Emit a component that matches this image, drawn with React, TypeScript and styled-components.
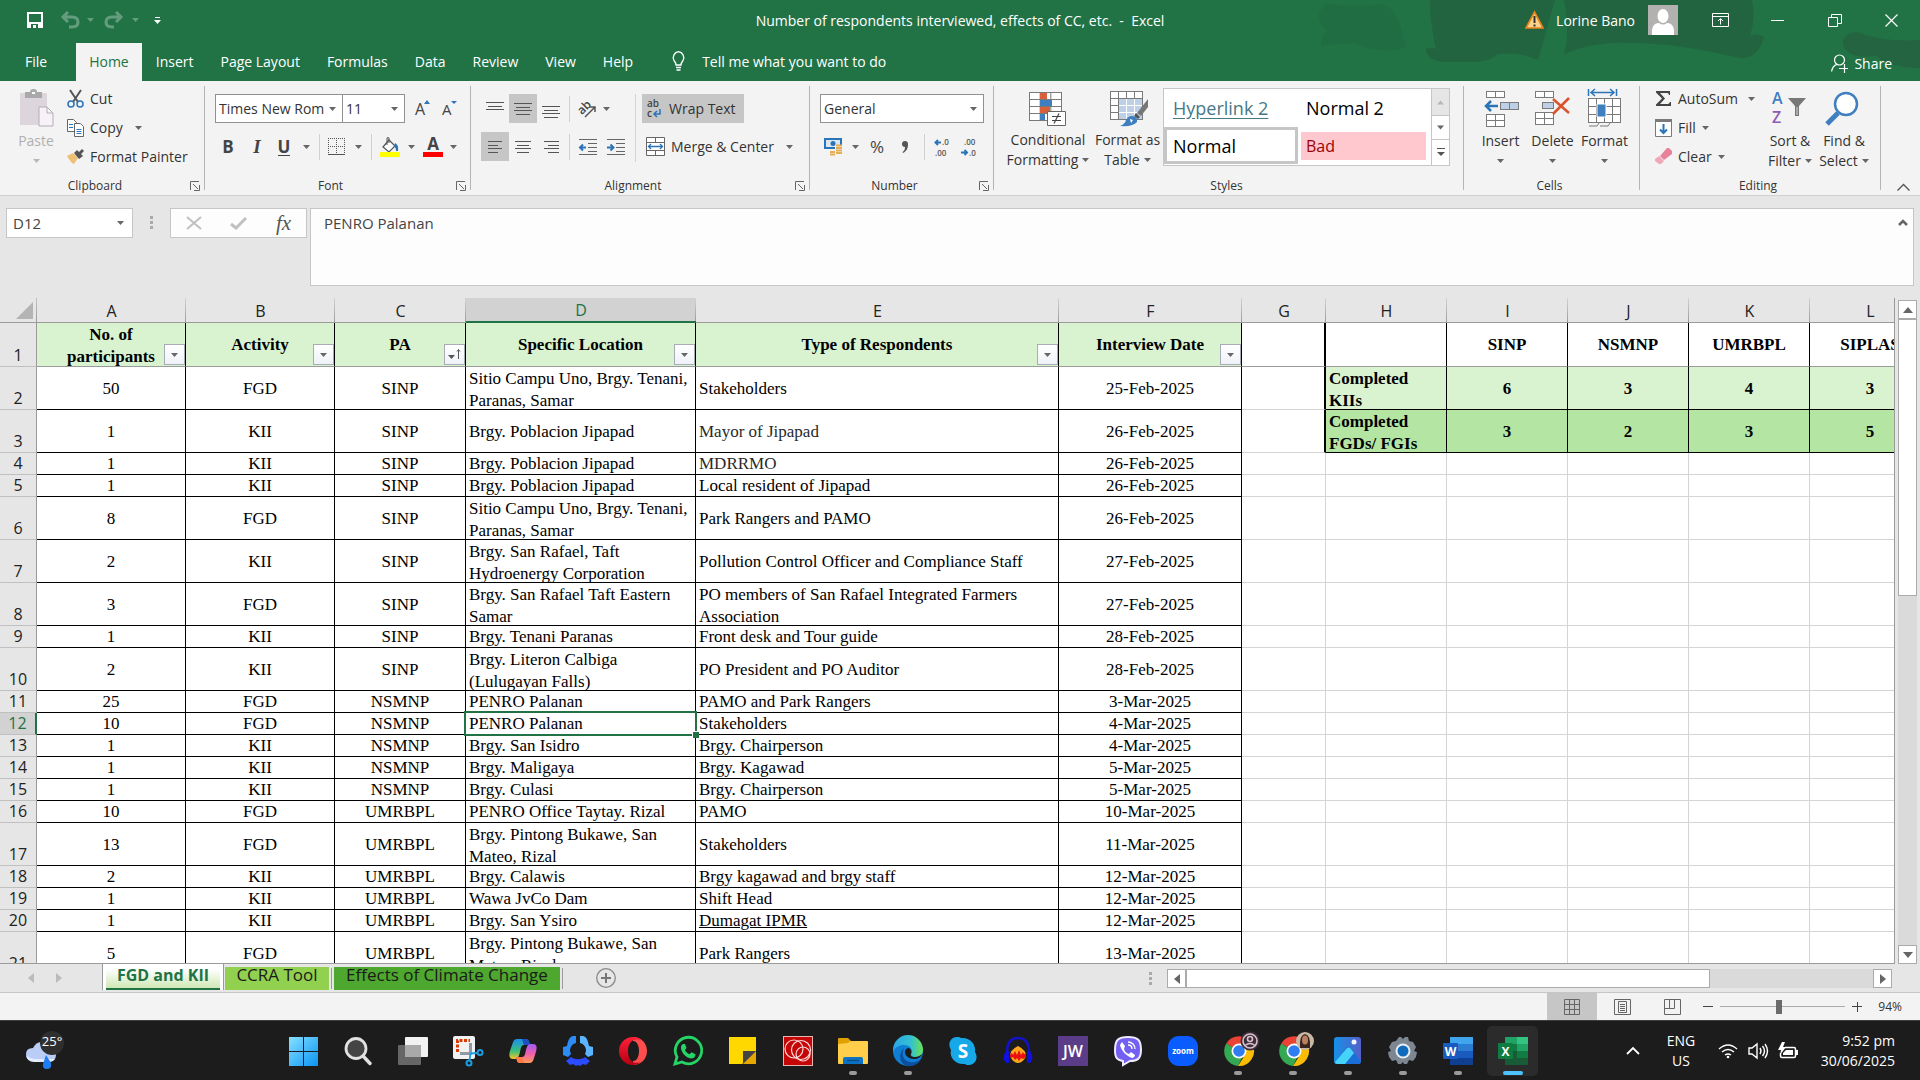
import React, { useState } from 'react';
import styled, { createGlobalStyle, css } from 'styled-components';

const UI = '"Open Sans", "Noto Sans", sans-serif';
const SERIF = '"Liberation Serif", "Times New Roman", serif';
const GREEN = '#217346';

const Global = createGlobalStyle`
  * { box-sizing: border-box; }
  body { margin: 0; font-family: ${UI}; font-size: 14px; color: #333; background: #e6e6e6; overflow: hidden; }
  button, select, input, textarea { font: inherit; color: inherit; margin: 0; }
  button { border: 0; padding: 0; background: none; }
  svg { display: block; flex: none; overflow: visible; }
`;

const Window = styled.div`
  display: flex;
  flex-direction: column;
  height: 100vh;
`;

/* ---------- title bar ---------- */
const Header = styled.header`
  position: relative;
  flex: none;
  height: 81px;
  background: ${GREEN};
  color: #fff;
  display: flex;
  flex-direction: column;
  justify-content: space-between;
`;
const Decor = styled.svg`
  position: absolute;
  top: 0;
  right: 0;
`;
const TitleRow = styled.div`
  position: relative;
  display: grid;
  grid-template-columns: 1fr auto 1fr;
  align-items: center;
  height: 40px;
`;
const QuickBar = styled.div`
  display: flex;
  align-items: center;
  padding-left: 15px;
`;
const TitleBtn = styled.button<{ $dim?: boolean; $w: number }>`
  width: ${p => p.$w}px;
  height: 30px;
  display: flex;
  align-items: center;
  justify-content: center;
  color: #fff;
  opacity: ${p => (p.$dim ? 0.3 : 1)};
`;
const Title = styled.h1`
  margin: 0;
  font-size: 14px;
  font-weight: 400;
  white-space: pre;
`;
const WindowBar = styled.div`
  display: flex;
  align-items: center;
  justify-content: flex-end;
`;
const UserName = styled.span`
  margin: 0 13px 0 12px;
`;
const Controls = styled.div`
  display: flex;
  margin-left: 14px;
`;
const TabRow = styled.nav`
  position: relative;
  display: flex;
  gap: 1px;
  height: 38px;
  align-items: stretch;
`;
const Tab = styled.button<{ $active?: boolean; $file?: boolean }>`
  padding: 0 13px 2px;
  color: ${p => (p.$active ? GREEN : '#fff')};
  background: ${p => (p.$active ? '#f3f3f3' : 'transparent')};
  ${p => p.$file && css`padding: 0 28px 2px 25px;`}
`;
const TellMe = styled.label`
  display: flex;
  align-items: center;
  gap: 16px;
  margin-left: 24px;
  padding-bottom: 2px;
`;
const TellInput = styled.input`
  width: 240px;
  border: 0;
  padding: 0;
  background: transparent;
  outline: 0;
  &::placeholder { color: #fff; opacity: 1; }
`;
const Share = styled.button`
  display: flex;
  align-items: center;
  gap: 5px;
  margin: 2px 28px 0 auto;
`;

/* ---------- ribbon ---------- */
const Ribbon = styled.div`
  flex: none;
  display: flex;
  height: 115px;
  background: #f3f3f3;
  border-bottom: 1px solid #d0d0d0;
`;
const GroupBox = styled.section<{ $w: number }>`
  width: ${p => p.$w}px;
  flex: none;
  display: flex;
  flex-direction: column;
  background: linear-gradient(#b4b4b4, #b4b4b4) right 5px / 1px 104px no-repeat;
`;
const GroupBody = styled.div<{ $p?: string }>`
  flex: 1;
  min-height: 0;
  display: flex;
  padding: ${p => p.$p || '13px 0 0 10px'};
`;
const GroupLabel = styled.div`
  display: flex;
  align-items: center;
  height: 19px;
  font-size: 12px;
  padding-right: 5px;
  & > span { flex: 1; text-align: center; }
`;
const Stack = styled.div<{ $gap?: number; $w?: number; $line?: boolean }>`
  display: flex;
  flex-direction: column;
  align-items: flex-start;
  gap: ${p => p.$gap || 0}px;
  ${p => p.$w && css`width: ${p.$w}px;`}
  ${p => p.$line && css`border-right: 1px solid #d4d4d4; height: 68px; margin-right: 6px;`}
`;
const Row = styled.div<{ $gap?: number }>`
  display: flex;
  align-items: center;
  height: 29px;
  gap: ${p => p.$gap || 0}px;
`;
const Tool = styled.button<{ $w: number; $on?: boolean }>`
  width: ${p => p.$w}px;
  height: 29px;
  display: flex;
  align-items: center;
  justify-content: center;
  font-size: 17px;
  color: #444;
  background: ${p => (p.$on ? '#c6c6c6' : 'transparent')};
`;
const Underlined = styled.b`
  line-height: 17px;
  border-bottom: 1px solid #444;
`;
const Italic = styled.em`
  font: italic 700 19px/20px ${SERIF};
`;
const Sep = styled.i<{ $w: number }>`
  width: ${p => p.$w}px;
  height: 26px;
  background: linear-gradient(#d0d0d0, #d0d0d0) center / 1px 100% no-repeat;
`;
const TextTool = styled.button<{ $on?: boolean }>`
  height: 29px;
  display: flex;
  align-items: center;
  gap: 6px;
  padding: 0 8px 0 4px;
  white-space: nowrap;
  background: ${p => (p.$on ? '#c6c6c6' : 'transparent')};
`;
const BigSet = styled.div`
  display: flex;
  padding-top: 5px;
`;
const Big = styled.button<{ $w: number; $dim?: boolean }>`
  width: ${p => p.$w}px;
  flex: none;
  display: flex;
  flex-direction: column;
  align-items: center;
  height: 83px;
  line-height: 20px;
  white-space: nowrap;
  color: ${p => (p.$dim ? '#b0b0b0' : '#333')};
`;
const BigIcon = styled.span`
  height: 42px;
  display: flex;
`;
const BigLine = styled.span`
  display: flex;
  align-items: center;
  gap: 4px;
  height: 20px;
`;
const SelectBox = styled.label<{ $w: number }>`
  display: grid;
  grid-template-columns: 1fr 20px;
  align-items: center;
  width: ${p => p.$w}px;
  height: 29px;
  border: 1px solid #919191;
  background: #fff;
  & + & { border-left-width: 0; }
  & > select {
    grid-area: 1 / 1 / 2 / 3;
    appearance: none;
    border: 0;
    background: transparent;
    height: 27px;
    padding: 0 12px 0 3px;
    width: 100%;
    outline: 0;
  }
  & > svg { grid-area: 1 / 2; justify-self: center; pointer-events: none; }
`;
const Gallery = styled.div`
  display: grid;
  grid-template-columns: 1fr 18px;
  width: 287px;
  height: 78px;
  border: 1px solid #c6c6c6;
  background: #fff;
`;
const Swatches = styled.div`
  display: grid;
  grid-template-columns: 134px 125px;
  grid-template-rows: 38px 37px;
  column-gap: 3px;
  align-items: center;
`;
const Swatch = styled.button<{ $kind: string }>`
  height: 37px;
  text-align: left;
  padding-left: 9px;
  font-size: 18px;
  line-height: 24px;
  color: #000;
  ${p => p.$kind === 'link' && css`color: #467886; text-decoration: underline; text-underline-offset: 3px;`}
  ${p => p.$kind === 'on' && css`border: 3px solid #c6c6c6; padding-left: 6px;`}
  ${p => p.$kind === 'plain' && css`padding-left: 5px;`}
  ${p => p.$kind === 'bad' && css`height: 28px; padding-left: 5px; background: #ffc7ce; color: #9c0006; font-size: 16px;`}
`;
const GalleryNav = styled.div`
  display: grid;
  grid-template-rows: 26px 24px 1fr;
  border-left: 1px solid #c6c6c6;
  & > button { display: flex; align-items: center; justify-content: center; }
  & > button + button { border-top: 1px solid #c6c6c6; }
  & > button:first-child { background: #e6e6e6; }
`;
const Collapse = styled.button`
  align-self: flex-end;
  margin: 0 10px 4px auto;
`;

/* ---------- formula bar ---------- */
const FormulaBar = styled.div`
  flex: none;
  display: flex;
  align-items: flex-start;
  padding: 12px 6px;
  height: 102px;
  font-size: 15px;
`;
const NameBox = styled.label`
  display: flex;
  align-items: center;
  width: 127px;
  height: 30px;
  border: 1px solid #c6c6c6;
  background: #fff;
  padding: 0 8px 0 6px;
  & > input { flex: 1; min-width: 0; border: 0; padding: 0; outline: 0; color: #444; }
`;
const Grip = styled.i<{ $w: number }>`
  width: ${p => p.$w}px;
  height: 30px;
  background:
    linear-gradient(#aaa, #aaa) 50% 8px / 3px 3px no-repeat,
    linear-gradient(#aaa, #aaa) 50% 13px / 3px 3px no-repeat,
    linear-gradient(#aaa, #aaa) 50% 18px / 3px 3px no-repeat;
`;
const FxBox = styled.div`
  display: grid;
  grid-template-columns: repeat(3, 1fr);
  width: 137px;
  height: 30px;
  border: 1px solid #c6c6c6;
  background: #fdfdfd;
  & > button { display: flex; align-items: center; justify-content: center; }
`;
const FxText = styled.span`
  font: italic 400 21px/22px ${SERIF};
  color: #555;
`;
const FormulaField = styled.div`
  flex: 1;
  display: flex;
  align-items: flex-start;
  height: 78px;
  margin-left: 3px;
  border: 1px solid #c6c6c6;
  background: #fdfdfd;
  & > textarea { flex: 1; height: 76px; resize: none; border: 0; outline: 0; background: transparent; padding: 4px 13px; line-height: 20px; color: #444; }
  & > button { padding: 10px 5px; }
`;

/* ---------- worksheet ---------- */
const SheetArea = styled.main`
  flex: 1;
  min-height: 0;
  display: grid;
  grid-template-columns: minmax(0, 1fr) 25px;
`;
const SheetClip = styled.div`
  overflow: hidden;
  background: #fff;
  border-right: 1px solid #9b9b9b;
  border-bottom: 1px solid #9b9b9b;
`;
const Sheet = styled.table`
  table-layout: fixed;
  border-spacing: 0;
  width: 1931px;
  font-family: ${SERIF};
  font-size: 17px;
  line-height: 22px;
  color: #000;
  & td, & th { padding: 0; font-weight: 400; }
`;
const Letter = styled.th<{ $on?: boolean }>`
  height: 25px;
  font: 400 16px/22px ${UI};
  vertical-align: bottom;
  color: ${p => (p.$on ? GREEN : '#222')};
  background:
    linear-gradient(#d4d4d4, #9b9b9b) right / 1px 100% no-repeat,
    ${p => (p.$on ? '#d2d2d2' : '#e6e6e6')};
  border-bottom: ${p => (p.$on ? `2px solid ${GREEN}` : '1px solid #9b9b9b')};
`;
const Corner = styled.th`
  background: linear-gradient(#c4c4c4, #9b9b9b) right / 1px 100% no-repeat, #e6e6e6;
  border-bottom: 1px solid #9b9b9b;
  vertical-align: bottom;
  & > svg { margin: 0 0 3px 16px; }
`;
const RowNo = styled.th<{ $on?: boolean }>`
  font: 400 16px/21px ${UI};
  vertical-align: bottom;
  color: ${p => (p.$on ? GREEN : '#222')};
  background: ${p => (p.$on ? '#d2d2d2' : '#e6e6e6')};
  border-right: ${p => (p.$on ? `2px solid ${GREEN}` : '1px solid #9b9b9b')};
  border-bottom: 1px solid #c0c0c0;
`;
const cellSkin = css<{ $bg?: string; $line: string; $right?: string }>`
  position: relative;
  background: ${p => p.$bg || '#fff'};
  border-bottom: 1px solid ${p => p.$line};
  border-right: ${p => p.$right || `1px solid ${p.$line}`};
`;
const Cell = styled.td<{ $bg?: string; $line: string; $right?: string }>`${cellSkin}`;
const HeadCell = styled.th<{ $bg?: string; $line: string; $right?: string }>`${cellSkin}`;
const Fit = styled.div<{ $h: number; $left?: boolean; $lines?: boolean; $bold?: boolean; $soft?: boolean; $u?: boolean }>`
  height: ${p => p.$h - 1}px;
  overflow: hidden;
  display: grid;
  align-content: ${p => (p.$lines ? 'start' : 'center')};
  padding: 1px 3px 0;
  text-align: ${p => (p.$left ? 'left' : 'center')};
  white-space: pre;
  font-weight: ${p => (p.$bold ? 700 : 400)};
  color: ${p => (p.$soft ? '#2a2a2a' : '#000')};
  text-decoration: ${p => (p.$u ? 'underline' : 'none')};
`;
const Filter = styled.button`
  position: absolute;
  right: 0;
  bottom: 1px;
  width: 21px;
  height: 21px;
  display: flex;
  align-items: center;
  justify-content: center;
  border: 1px solid #a8acb8;
  background: linear-gradient(#fff, #eef1f7);
`;
const Selection = styled.i`
  position: absolute;
  inset: -2px;
  border: 2px solid ${GREEN};
  z-index: 1;
  &::after {
    content: '';
    position: absolute;
    right: -4px;
    bottom: -4px;
    width: 6px;
    height: 6px;
    background: ${GREEN};
    border: solid #fff;
    border-width: 1px 0 0 1px;
  }
`;
const VScroll = styled.div`
  display: flex;
  flex-direction: column;
  margin: 2px 3px 0;
  background: #dadada;
`;
const ScrollBtn = styled.button`
  flex: none;
  width: 19px;
  height: 19px;
  display: flex;
  align-items: center;
  justify-content: center;
  border: 1px solid #ababab;
  background: #fff;
`;
const VThumb = styled.div`
  margin-bottom: auto;
  flex: none;
  height: 277px;
  border: 1px solid #ababab;
  background: #fff;
`;

/* ---------- sheet tabs ---------- */
const SheetBar = styled.div`
  flex: none;
  display: flex;
  height: 29px;
  border-bottom: 1px solid #c6c6c6;
  padding-right: 28px;
`;
const SheetNav = styled.div`
  width: 103px;
  display: flex;
  gap: 18px;
  padding-left: 26px;
  align-items: center;
`;
const SheetTab = styled.button<{ $bg?: string; $w: number }>`
  width: ${p => p.$w}px;
  height: 23px;
  margin: 3px 0 0 2px;
  font-size: 17px;
  line-height: 16px;
  padding-bottom: 7px;
  color: #1a1a1a;
  background: ${p => p.$bg};
  white-space: nowrap;
`;
const ActiveTab = styled(SheetTab)`
  height: 26px;
  margin: 0;
  padding-bottom: 4px;
  font-size: 16px;
  font-weight: 700;
  color: ${GREEN};
  border: solid #fff;
  border-width: 0 3px;
  background: linear-gradient(#fff 20%, #cfe8b4 92%, #fff 92%);
  box-shadow: inset 0 -2px ${GREEN}, -1px 0 #9b9b9b, 1px 0 #9b9b9b;
`;
const TabLine = styled.i`
  width: 1px;
  height: 21px;
  margin: 4px 0 0 2px;
  background: #9b9b9b;
`;
const AddTab = styled.button`
  margin: 0 auto 0 33px;
`;
const HScroll = styled.div`
  display: flex;
  width: 725px;
  height: 19px;
  margin-top: 5px;
  background: #dadada;
`;
const HThumb = styled.div`
  flex: none;
  width: 524px;
  margin-right: auto;
  border: 1px solid #ababab;
  background: #fff;
`;

/* ---------- status bar ---------- */
const Status = styled.div`
  flex: none;
  display: flex;
  justify-content: flex-end;
  align-items: center;
  height: 27px;
  padding-right: 18px;
  background: #f3f3f3;
  font-size: 12px;
`;
const Views = styled.div`
  display: flex;
  margin-right: 5px;
`;
const View = styled.button<{ $on?: boolean }>`
  width: 50px;
  height: 27px;
  display: flex;
  align-items: center;
  justify-content: center;
  background: ${p => (p.$on ? '#c6c6c6' : 'transparent')};
`;
const Zoom = styled.input`
  appearance: none;
  width: 125px;
  height: 16px;
  margin: 0 6px;
  background: linear-gradient(#ababab, #ababab) center / 100% 1px no-repeat;
  &::-webkit-slider-thumb { appearance: none; width: 6px; height: 14px; background: #6b6b6b; }
`;
const ZoomBtn = styled.button`
  width: 12px;
  height: 20px;
  display: flex;
  align-items: center;
  justify-content: center;
`;
const Percent = styled.output`
  width: 39px;
  text-align: right;
`;

/* ---------- taskbar ---------- */
const Taskbar = styled.footer`
  flex: none;
  display: flex;
  align-items: center;
  height: 60px;
  border-top: 1px solid #3a3f3d;
  background: #1c1c1c;
  color: #fff;
  padding-right: 25px;
`;
const Weather = styled.button`
  width: 275px;
  padding-left: 24px;
`;
const Apps = styled.div`
  display: flex;
`;
const AppBtn = styled.button<{ $on?: boolean }>`
  position: relative;
  width: 51px;
  height: 50px;
  margin: 0 2px;
  border-radius: 5px;
  display: flex;
  align-items: center;
  justify-content: center;
  background: ${p => (p.$on ? '#2b2b2b' : 'transparent')};
`;
const Mark = styled.i<{ $on?: boolean }>`
  position: absolute;
  bottom: 1px;
  left: 0;
  right: 0;
  margin: auto;
  width: ${p => (p.$on ? 20 : 8)}px;
  height: 4px;
  border-radius: 2px;
  background: ${p => (p.$on ? '#4cc2ff' : '#9a9a9a')};
`;
const Tray = styled.div`
  margin-left: auto;
  display: flex;
  align-items: center;
  line-height: 20px;
`;
const Lang = styled.button`
  width: 60px;
  margin: 0 7px 0 11px;
`;
const TrayIcons = styled.button`
  display: flex;
  align-items: center;
  gap: 10px;
`;
const Clock = styled.button`
  width: 97px;
  text-align: right;
`;

/* ---------- icons ---------- */
const Caret = ({ c = '#666' }: { c?: string }) => (
  <svg width="7" height="4" viewBox="0 0 7 4"><path d="M0 0h7L3.500 4z" fill={c} /></svg>
);
const Tri = ({ d, c = '#666', w = 10 }: { d: 'u' | 'd' | 'l' | 'r'; c?: string; w?: number }) => (
  <svg width={w} height={w} viewBox="0 0 10 10">
    <path fill={c} d={{ u: 'M0 8h10L5 2z', d: 'M0 2h10L5 8z', l: 'M8 0v10L2 5z', r: 'M2 0v10l6-5z' }[d]} />
  </svg>
);
const Launcher = () => (
  <button aria-label="More options">
    <svg width="10" height="10" viewBox="0 0 10 10" fill="none" stroke="#666">
      <path d="M.5 9V.5H9M3 3l5 5M9.500 4v5.500H4" />
    </svg>
  </button>
);
const Lines = ({ rows }: { rows: [number, number, number][] }) => (
  <svg width="18" height="18" viewBox="0 0 18 18" stroke="#555" fill="none">
    {rows.map(([y, a, b]) => <path key={y} d={`M${a} ${y}.5H${b}`} />)}
  </svg>
);
const Indent = ({ right }: { right?: boolean }) => (
  <svg width="18" height="18" viewBox="0 0 18 18" fill="none">
    <path d="M0 1.500h18M9 5.500h9M9 9.500h9M9 13.500h9M0 16.500h18" stroke="#666" />
    <path d={right ? 'M0 9.500h6M3.500 6.500l3 3-3 3' : 'M7 9.500H1M4 6.500l-3 3 3 3'} stroke="#2b74b8" strokeWidth="2" />
  </svg>
);
const Decimal = ({ more }: { more?: boolean }) => (
  <svg width="17" height="18" viewBox="0 0 17 18" fontFamily="Open Sans" fontSize="8" fontWeight="600" fill="#555">
    <text x={more ? 8 : 3} y="7">{more ? '.0' : '.00'}</text>
    <text x={more ? 1 : 8} y="18">{more ? '.00' : '.0'}</text>
    <path d={more ? 'M7 4.500H1M4 2L1.500 4.500 4 7' : 'M0 14.500h6M3.500 12L6 14.500 3.500 17'} stroke="#2b74b8" strokeWidth="2" fill="none" />
  </svg>
);
const Cells = ({ x, y, w, h, c, r, fill = '#fff' }: { x: number; y: number; w: number; h: number; c: number; r: number; fill?: string }) => (
  <g stroke="#7a7a7a" fill={fill}>
    <rect x={x} y={y} width={w} height={h} />
    {Array.from({ length: c - 1 }, (_, i) => <path key={'c' + i} d={`M${x + ((i + 1) * w) / c} ${y}v${h}`} />)}
    {Array.from({ length: r - 1 }, (_, i) => <path key={'r' + i} d={`M${x} ${y + ((i + 1) * h) / r}h${w}`} />)}
  </g>
);

const Chrome = ({ badge }: { badge: React.ReactNode }) => (
  <svg width="44" height="38" viewBox="-8 2 44 38">
    <path d="M15 21L2.200 13.500A15 15 0 0 1 28 13.500z" fill="#ea4335" />
    <path d="M15 21L2.200 13.500A15 15 0 0 0 14 36l6-12z" fill="#34a853" />
    <path d="M15 13.500h13A15 15 0 0 1 14 36l7.500-12z" fill="#fbbc04" />
    <circle cx="15" cy="21" r="7.500" fill="#fff" />
    <circle cx="15" cy="21" r="5.800" fill="#2f7df0" />
    {badge}
  </svg>
);

const taskIcons: { name: string; run?: boolean; on?: boolean; art: React.ReactNode }[] = [
  { name: 'Start', art: <svg width="30" height="30" viewBox="0 0 30 30"><defs><linearGradient id="win" gradientUnits="userSpaceOnUse" x2="30" y2="30"><stop stopColor="#8be3ff" /><stop offset="1" stopColor="#0a93f5" /></linearGradient></defs><path fill="url(#win)" d="M1 1h14v14H1zM16 1h14v14H16zM1 16h14v14H1zM16 16h14v14H16z" /></svg> },
  { name: 'Search', art: <svg width="30" height="30" viewBox="0 0 30 30" fill="#444"><circle cx="13" cy="12.500" r="10" stroke="#e2e2e2" strokeWidth="2.800" /><path d="M20.500 20.500l6.500 7" stroke="#e2e2e2" strokeWidth="3.400" strokeLinecap="round" /></svg> },
  { name: 'Task view', art: <svg width="30" height="30" viewBox="0 0 30 30"><rect x="7" y="1" width="23" height="20" rx="1" fill="#f2f2f2" /><rect x="0" y="9" width="23" height="20" rx="1" fill="#666" /><path d="M7 9h16v12H7z" fill="#a9a9a9" /></svg> },
  { name: 'Snipping Tool', art: <svg width="32" height="32" viewBox="0 0 32 32" fill="none"><rect x="1" y="1" width="22" height="23" rx="2" fill="#f1f1f1" /><path d="M5.500 17V5.500H18" stroke="#d83b01" strokeWidth="3" strokeDasharray="3 1.500" /><path d="M18.500 8v10.500H8" stroke="#8f9aa5" strokeWidth="3" /><circle cx="28" cy="17.500" r="2.500" stroke="#1b9de2" strokeWidth="2" /><circle cx="17" cy="28" r="2.500" stroke="#1b9de2" strokeWidth="2" /><path d="M18 18.500l7.500-.500M18.500 18l-1 7.500" stroke="#1b9de2" strokeWidth="1.800" /></svg> },
  { name: 'Copilot', art: <svg width="30" height="30" viewBox="0 0 30 30"><defs><linearGradient id="cpA" y2="1" x2="0"><stop stopColor="#1a8ff0" /><stop offset=".6" stopColor="#3cc07a" /><stop offset="1" stopColor="#f7c325" /></linearGradient><linearGradient id="cpB" y2="1" x2="0"><stop stopColor="#a15bf5" /><stop offset=".5" stopColor="#ee5fae" /><stop offset="1" stopColor="#ff9a54" /></linearGradient></defs><path d="M9 3h9c3 0 3 3 4 6h-6c-3 0-3 3-4 7s-2 7-5 7H5c-5 0-4-6-2-11S5 3 9 3z" fill="url(#cpA)" /><path d="M14 3h4c3 0 3 3 4 6h-6z" fill="#1c4fbf" /><path d="M21 27h-9c-3 0-3-3-4-6h6c3 0 3-3 4-7s2-6 5-6h2c5 0 4 5 2 11s-2 8-6 8z" fill="url(#cpB)" /><path d="M16 27h-4c-3 0-3-3-4-6h6z" fill="#ff7a45" /></svg> },
  { name: 'Hub', art: <svg width="32" height="32" viewBox="0 0 32 32"><path d="M14 1v7c-4 1-6 4-6 8l1 3-3 3-5-2v-8l4-1c1-5 2-9 6-10z" fill="#2b8cf7" /><path d="M18 1v7c4 1 6 4 6 8l-1 3 3 3 5-2v-8l-4-1c-1-5-2-9-6-10z" fill="#5cb4ff" /><path d="M4 26l5-4c4 3 10 3 14 0l5 4-4 4-3-1-3 2-2-1-2 1-3-2-3 1z" fill="#2a4bff" /></svg> },
  { name: 'Opera', art: <svg width="30" height="30" viewBox="0 0 30 30"><defs><linearGradient id="op" y2="1" x2="0"><stop stopColor="#ff2038" /><stop offset="1" stopColor="#b50012" /></linearGradient></defs><path fillRule="evenodd" fill="#ff4d4d" d="M15 1c8 0 14 6 14 14s-6 14-14 14zm0 4c4 0 6 5 6 10s-2 10-6 10z" /><path fillRule="evenodd" fill="url(#op)" d="M15 1a14 14 0 1 0 0 28c3 0 6-1 8-3-8 3-13-2-13-11S16 1 24 5c-3-3-6-4-9-4z" /></svg> },
  { name: 'WhatsApp', art: <svg width="30" height="30" viewBox="0 0 30 30"><path d="M2 28l2-7A13.200 13.200 0 1 1 9 26z" fill="none" stroke="#25d366" strokeWidth="2.800" /><path d="M10 8l2 0 1.500 4-1.500 2c1 2 2.500 3.500 4.500 4.200l2-2 4 2c0 3-2 4.300-4.500 4.300C13 22 7.500 16 8 11c0-1.500 1-2.500 2-3z" fill="#25d366" /></svg> },
  { name: 'Sticky Notes', art: <svg width="27" height="27" viewBox="0 0 27 27"><path d="M0 0h27v14L13 27H0z" fill="#ffd800" /><path d="M27 14v13H13z" fill="#e6a700" /><path d="M14 14h13L14 27z" fill="#444" /></svg> },
  { name: 'Circles', art: <svg width="30" height="30" viewBox="0 0 30 30" fill="none"><rect x=".5" y=".5" width="29" height="29" fill="#c40606" stroke="#e5b5b5" /><g stroke="#fbd8d8" strokeWidth="1.200"><circle cx="11" cy="13" r="9" /><circle cx="18" cy="14" r="9.500" /><circle cx="20" cy="18" r="7" /></g></svg> },
  { name: 'File Explorer', run: true, art: <svg width="30" height="30" viewBox="0 0 30 30"><path d="M0 3q0-1 1-1h9l3 3v4H0z" fill="#e0a000" /><path d="M0 8l10-1q2-2 3-2h16q1 0 1 1v21q0 1-1 1H1q-1 0-1-1z" fill="#ffcf4b" /><path d="M5 28v-5q0-2 2-2h16q2 0 2 2v5z" fill="#0c73c4" /><path d="M9 24.500h12" stroke="#0a4f8c" strokeWidth="1.500" /></svg> },
  { name: 'Edge', run: true, art: <svg width="30" height="30" viewBox="0 0 30 30"><defs><linearGradient id="ed" x2="1"><stop stopColor="#2aa5e8" /><stop offset=".6" stopColor="#35c1d0" /><stop offset="1" stopColor="#6be24e" /></linearGradient></defs><circle cx="15" cy="15" r="15" fill="#0f7fd6" /><path d="M11 12c-3 6-1 13 6 14 5 1 9-1 12-4-3 6-9 9-15 8C6 28 5 17 11 12z" fill="#0c4f9e" /><path d="M0 14A15 15 0 0 1 30 14c0 5-4 7-8 7-3 0-4-1-4-3 3-4-1-9-7-9C6 9 2 11 0 16z" fill="url(#ed)" /><path d="M18 18c-1 2 1 3 4 3 3 0 5-1 7-3-1 3-4 5-8 5-5 0-9-3-9-7 0-3 2-4 4-4 2 1 3 4 2 6z" fill="#1c1c1c" /></svg> },
  { name: 'Skype', art: <svg width="28" height="28" viewBox="0 0 28 28"><path d="M8 0c2 0 3 0 4 1 9-1 15 6 14 14 4 6 0 13-6 13-2 0-3 0-4-1C7 28 0 21 2 13-2 6 2 0 8 0z" fill="#16a8e8" /><text x="14" y="21" fontFamily="Open Sans" fontSize="19" fontWeight="700" fill="#fff" textAnchor="middle">S</text></svg> },
  { name: 'Audacity', art: <svg width="30" height="28" viewBox="0 0 30 28"><path d="M7 19q0-6 8-10 8 4 8 10-3 7-8 7t-8-7z" fill="#ffa61a" /><path d="M7 18l2-2 1 2 2-4 2 4 2-5 2 5 2-3 1 2h2v3l-3 2-2-1-2 3-2-3-2 2-2-3-2 1-1-1z" fill="#e81010" /><path d="M4 15C4 6 8 1 15 1s11 5 11 14" fill="none" stroke="#1212c8" strokeWidth="2.500" /><path d="M3 14h3v12H3q-5-5 0-12zM27 14h-3v12h3q5-5 0-12z" fill="#1010e0" /></svg> },
  { name: 'JW Library', art: <svg width="30" height="30" viewBox="0 0 30 30"><path d="M0 0h30v30H0z" fill="#5b3c88" /><text x="15" y="21" fontFamily="Open Sans" fontSize="16" fontWeight="600" fill="#fff" textAnchor="middle">JW</text></svg> },
  { name: 'Viber', art: <svg width="30" height="30" viewBox="0 0 30 30"><path d="M15 1c10 0 13 3 13 13 0 9-4 11-11 11l-7 4v-4C4 24 2 22 2 14 2 4 5 1 15 1z" fill="#7360f2" stroke="#efeaff" strokeWidth="2" /><path d="M9 6l3 4-1 3c1 3 2 4 5 5l2-2 4 3c0 2-2 3-3 3C13 20 8 14 7 9z" fill="#fff" /><path d="M15 6c4 0 7 3 7 7M15 9c2.500 0 4 1.500 4 4" stroke="#fff" fill="none" strokeWidth="1.300" /></svg> },
  { name: 'Zoom', art: <svg width="30" height="30" viewBox="0 0 30 30"><rect width="30" height="30" rx="11" fill="#0b5cff" /><text x="15" y="18" fontFamily="Open Sans" fontSize="8" fontWeight="700" fill="#fff" textAnchor="middle">zoom</text></svg> },
  { name: 'Chrome', run: true, art: <Chrome badge={<g><circle cx="26" cy="11" r="9.500" fill="#3c2e38" /><g fill="none" stroke="#d8bfcd" strokeWidth="1.600"><circle cx="26" cy="11" r="7" /><circle cx="26" cy="9" r="2.500" /><path d="M21 15.500q5-4 10 0" /></g></g>} /> },
  { name: 'Chrome profile', run: true, art: <Chrome badge={<g><circle cx="26" cy="11" r="9" fill="#c9b8a6" /><path d="M21 18q-1-13 5-14 6 1 5 14z" fill="#3a2420" /><ellipse cx="26" cy="10" rx="3" ry="4.500" fill="#b98062" /></g>} /> },
  { name: 'Photos', run: true, art: <svg width="27" height="27" viewBox="0 0 27 27"><defs><linearGradient id="ph" x2="1"><stop stopColor="#1690e8" /><stop offset="1" stopColor="#5560c8" /></linearGradient></defs><rect width="27" height="27" rx="3" fill="url(#ph)" /><path d="M1 25L12 11q2-2 4 0l11 13q0 3-3 3H3q-2 0-2-2z" fill="#1a6ed8" /><path d="M1 25L13 11q2-1 3 0l4 5-9 11H3q-2 0-2-2z" fill="#45d3fa" /><circle cx="20" cy="5" r="2.500" fill="#f3f3ff" /></svg> },
  { name: 'Settings', run: true, art: <svg width="30" height="30" viewBox="0 0 30 30"><path d="M11 1h2l2 2 2-2h3l1 4 4 1 3 5-2 4 3 1-1 5-3 4-4-1-2 4h-3l-1-2-2 2h-3l-2-4-4 1-3-4-1-5 3-1-2-4 3-5 4-1z" fill="#7d8791" /><circle cx="15" cy="15" r="7.500" fill="#e8edf2" /><circle cx="15" cy="15" r="5.500" fill="#0f6cbd" /></svg> },
  { name: 'Word', run: true, art: <svg width="30" height="28" viewBox="0 0 30 28"><path d="M7 0h23v7H7z" fill="#41a5ee" /><path d="M7 7h23v7H7z" fill="#2b7cd3" /><path d="M7 14h23v7H7z" fill="#185abd" /><path d="M7 21h23v7H7z" fill="#103f91" /><rect y="6" width="15" height="16" rx="1" fill="#185abd" /><text x="7.500" y="18.500" fontFamily="Open Sans" fontSize="12" fontWeight="700" fill="#fff" textAnchor="middle">W</text></svg> },
  { name: 'Excel', run: true, on: true, art: <svg width="30" height="28" viewBox="0 0 30 28"><path d="M7 0h12v7H7z" fill="#21a366" /><path d="M19 0h11v7H19z" fill="#33c481" /><path d="M7 7h12v7H7z" fill="#107c41" /><path d="M19 7h11v7H19z" fill="#21a366" /><path d="M7 14h12v14H7z" fill="#185c37" /><path d="M19 14h11v7H19z" fill="#107c41" /><path d="M19 21h11v7H19z" fill="#185c37" /><rect y="6" width="15" height="16" rx="1" fill="#107c41" /><text x="7.500" y="18.500" fontFamily="Open Sans" fontSize="12" fontWeight="700" fill="#fff" textAnchor="middle">X</text></svg> },
];

/* ---------- data ---------- */
const columns = [
  ['A', 149], ['B', 149], ['C', 131], ['D', 230], ['E', 363], ['F', 183], ['G', 84],
  ['H', 121], ['I', 121], ['J', 121], ['K', 121], ['L', 121],
] as [string, number][];
const heads = ['No. of\nparticipants', 'Activity', 'PA', 'Specific Location', 'Type of Respondents', 'Interview Date'];
const people: string[][] = [
  ['50', 'FGD', 'SINP', 'Sitio Campu Uno, Brgy. Tenani,\nParanas, Samar', 'Stakeholders', '25-Feb-2025'],
  ['1', 'KII', 'SINP', 'Brgy. Poblacion Jipapad', 'Mayor of Jipapad', '26-Feb-2025'],
  ['1', 'KII', 'SINP', 'Brgy. Poblacion Jipapad', 'MDRRMO', '26-Feb-2025'],
  ['1', 'KII', 'SINP', 'Brgy. Poblacion Jipapad', 'Local resident of Jipapad', '26-Feb-2025'],
  ['8', 'FGD', 'SINP', 'Sitio Campu Uno, Brgy. Tenani,\nParanas, Samar', 'Park Rangers and PAMO', '26-Feb-2025'],
  ['2', 'KII', 'SINP', 'Brgy. San Rafael, Taft\nHydroenergy Corporation', 'Pollution Control Officer and Compliance Staff', '27-Feb-2025'],
  ['3', 'FGD', 'SINP', 'Brgy. San Rafael Taft Eastern\nSamar', 'PO members of San Rafael Integrated Farmers\nAssociation', '27-Feb-2025'],
  ['1', 'KII', 'SINP', 'Brgy. Tenani Paranas', 'Front desk and Tour guide', '28-Feb-2025'],
  ['2', 'KII', 'SINP', 'Brgy. Literon Calbiga\n(Lulugayan Falls)', 'PO President and PO Auditor', '28-Feb-2025'],
  ['25', 'FGD', 'NSMNP', 'PENRO Palanan', 'PAMO and Park Rangers', '3-Mar-2025'],
  ['10', 'FGD', 'NSMNP', 'PENRO Palanan', 'Stakeholders', '4-Mar-2025'],
  ['1', 'KII', 'NSMNP', 'Brgy. San Isidro', 'Brgy. Chairperson', '4-Mar-2025'],
  ['1', 'KII', 'NSMNP', 'Brgy. Maligaya', 'Brgy. Kagawad', '5-Mar-2025'],
  ['1', 'KII', 'NSMNP', 'Brgy. Culasi', 'Brgy. Chairperson', '5-Mar-2025'],
  ['10', 'FGD', 'UMRBPL', 'PENRO Office Taytay. Rizal', 'PAMO', '10-Mar-2025'],
  ['13', 'FGD', 'UMRBPL', 'Brgy. Pintong Bukawe, San\nMateo, Rizal', 'Stakeholders', '11-Mar-2025'],
  ['2', 'KII', 'UMRBPL', 'Brgy. Calawis', 'Brgy kagawad and brgy staff', '12-Mar-2025'],
  ['1', 'KII', 'UMRBPL', 'Wawa JvCo Dam', 'Shift Head', '12-Mar-2025'],
  ['1', 'KII', 'UMRBPL', 'Brgy. San Ysiro', 'Dumagat IPMR', '12-Mar-2025'],
  ['5', 'FGD', 'UMRBPL', 'Brgy. Pintong Bukawe, San\nMateo, Rizal', 'Park Rangers', '13-Mar-2025'],
];
const tallRows = [2, 3, 6, 7, 8, 10, 17, 21];
const summary: Record<number, { bg: string; cells: string[] }> = {
  2: { bg: '#d9f2d0', cells: ['Completed\nKIIs', '6', '3', '4', '3'] },
  3: { bg: '#b4e5a2', cells: ['Completed\nFGDs/ FGIs', '3', '2', '3', '5'] },
};
const GRID = '#d4d4d4';

function Group({ w, label, launch, p, children }: { w: number; label: string; launch?: boolean; p?: string; children: React.ReactNode }) {
  return (
    <GroupBox $w={w} aria-label={label}>
      <GroupBody $p={p}>{children}</GroupBody>
      <GroupLabel><span>{label}</span>{launch && <Launcher />}</GroupLabel>
    </GroupBox>
  );
}
function Picker({ w, value, name }: { w: number; value: string; name: string }) {
  return (
    <SelectBox $w={w}>
      <select aria-label={name} defaultValue={value}><option>{value}</option></select>
      <Caret />
    </SelectBox>
  );
}
function BigTool({ w, icon, lines, dim }: { w: number; icon: React.ReactNode; lines: string[]; dim?: boolean }) {
  return (
    <Big $w={w} $dim={dim}>
      <BigIcon>{icon}</BigIcon>
      <BigLine>{lines[0]}</BigLine>
      <BigLine>{lines[1]}<Caret c={dim ? '#b8b8b8' : '#666'} /></BigLine>
    </Big>
  );
}
const Drop = ({ w, name }: { w: number; name: string }) => <Tool $w={w} aria-label={name}><Caret /></Tool>;

function RibbonPanel() {
  return (
    <Ribbon>
      <Group w={205} label="Clipboard" launch p="3px 0 0 9px">
        <BigSet>
          <BigTool w={54} dim lines={['Paste', '']} icon={
            <svg width="36" height="40" viewBox="0 0 36 40"><path d="M2 4h27v32H2z" fill="#dcd6dc" /><path d="M7 3h5q0-3 3-3h1q3 0 3 3h5v6H7z" fill="#a9a9a9" /><path d="M14 3h3v2h-3z" fill="#fff" /><path d="M21 18h8l6 6v13H21z" fill="#f6f2f8" stroke="#b3aeb5" /><path d="M29 18v6h6" fill="none" stroke="#b3aeb5" /></svg>
          } />
        </BigSet>
        <Stack>
          <TextTool><svg width="17" height="18" viewBox="0 0 17 18" fill="none"><path d="M3 0l8 12M14 0L6 12" stroke="#555" strokeWidth="2" /><circle cx="4" cy="14" r="3" stroke="#2b74b8" strokeWidth="1.500" /><circle cx="13" cy="14" r="3" stroke="#2b74b8" strokeWidth="1.500" /></svg>Cut</TextTool>
          <Row>
            <TextTool><svg width="17" height="18" viewBox="0 0 17 18" fill="#fff" stroke="#666"><path d="M.5.500h6l3 3v9H.500z" /><path d="M7.500 4.500h6l3 3v10h-9z" /><path d="M2 5.500h4M2 8.500h4M9.500 10.500h5M9.500 12.500h5M9.500 14.500h5" stroke="#2b74b8" /></svg>Copy</TextTool>
            <Drop w={16} name="Copy options" />
          </Row>
          <TextTool><svg width="17" height="16" viewBox="0 0 17 16"><path d="M0 7l6-3 5 5-4 6q-3-1-7-8z" fill="#eec075" /><path d="M7 4l3-3 2 2 3-3 2 2-3 3 2 2-4 3z" fill="#555" /></svg>Format Painter</TextTool>
        </Stack>
      </Group>

      <Group w={266} label="Font" launch>
        <Stack $gap={9}>
          <Row>
            <Picker w={128} value="Times New Rom" name="Font" />
            <Picker w={62} value="11" name="Font size" />
            <Tool $w={34} aria-label="Increase font size"><svg width="15" height="18" viewBox="0 0 15 18"><text x="0" y="15" fontFamily="Open Sans" fontSize="16" fill="#444">A</text><path d="M9 4h6l-3-4z" fill="#2b74b8" /></svg></Tool>
            <Tool $w={20} aria-label="Decrease font size"><svg width="15" height="18" viewBox="0 0 15 18"><text x="0" y="15" fontFamily="Open Sans" fontSize="15" fill="#444">A</text><path d="M9 1h6l-3 3z" fill="#2b74b8" /></svg></Tool>
          </Row>
          <Row>
            <Tool $w={26}><b>B</b></Tool>
            <Tool $w={32}><Italic>I</Italic></Tool>
            <Tool $w={22}><Underlined>U</Underlined></Tool>
            <Drop w={22} name="Underline options" />
            <Sep $w={4} />
            <Tool $w={31} aria-label="Borders"><svg width="17" height="17" viewBox="0 0 17 17" stroke="#555" fill="none"><path d="M.5 0v16M8.500 0v16M16.500 0v16M0 .5h17M0 8.500h17" strokeDasharray="1 1" /><path d="M0 16.500h17" /></svg></Tool>
            <Drop w={13} name="Border options" />
            <Sep $w={12} />
            <Tool $w={26} aria-label="Fill colour"><svg width="20" height="20" viewBox="0 0 20 20"><path d="M9 3l6 6-6 6-6-5z" fill="#fff" stroke="#555" strokeWidth="1.200" /><path d="M7 8V1q1-1 2 0v5" fill="none" stroke="#555" /><path d="M15 6q4 2 3 8h-2q0-4-2-4z" fill="#2b74b8" /><path d="M0 15h20v5H0z" fill="#ff0" /></svg></Tool>
            <Drop w={16} name="Fill options" />
            <Tool $w={28} aria-label="Font colour"><svg width="20" height="20" viewBox="0 0 20 20"><text x="10" y="13" fontFamily="Open Sans" fontSize="17" fontWeight="700" fill="#444" textAnchor="middle">A</text><path d="M0 15h20v5H0z" fill="red" /></svg></Tool>
            <Drop w={13} name="Font colour options" />
          </Row>
        </Stack>
      </Group>

      <Group w={339} label="Alignment" launch>
        <Stack $gap={9} $w={155} $line>
          <Row>
            <Tool $w={28} aria-label="Top align"><Lines rows={[[2, 0, 18], [6, 2, 16], [9, 0, 18]]} /></Tool>
            <Tool $w={28} $on aria-label="Middle align"><Lines rows={[[3, 0, 18], [7, 2, 16], [10, 0, 18], [14, 2, 16]]} /></Tool>
            <Tool $w={28} aria-label="Bottom align"><Lines rows={[[6, 0, 18], [10, 2, 16], [13, 0, 18], [17, 2, 16]]} /></Tool>
            <Sep $w={8} />
            <Tool $w={28} aria-label="Orientation"><svg width="19" height="18" viewBox="0 0 19 18"><text x="0" y="12" transform="rotate(-45 6 9)" fontFamily="Open Sans" fontSize="12" fontWeight="600" fill="#444">ab</text><path d="M7 17L17 7M12 7h5v5" fill="none" stroke="#555" strokeWidth="1.500" /></svg></Tool>
            <Drop w={10} name="Orientation options" />
          </Row>
          <Row>
            <Tool $w={28} $on aria-label="Align left"><Lines rows={[[3, 2, 16], [7, 2, 12], [10, 2, 16], [14, 2, 12]]} /></Tool>
            <Tool $w={28} aria-label="Centre"><Lines rows={[[3, 1, 17], [7, 3, 15], [10, 1, 17], [14, 3, 15]]} /></Tool>
            <Tool $w={28} aria-label="Align right"><Lines rows={[[3, 2, 17], [7, 6, 17], [10, 2, 17], [14, 6, 17]]} /></Tool>
            <Sep $w={8} />
            <Tool $w={29} aria-label="Decrease indent"><Indent /></Tool>
            <Tool $w={28} aria-label="Increase indent"><Indent right /></Tool>
          </Row>
        </Stack>
        <Stack $gap={9}>
          <TextTool $on><svg width="17" height="18" viewBox="0 0 17 18" fontFamily="Open Sans" fontSize="10" fontWeight="600" fill="#444"><text x="1" y="7">ab</text><text x="1" y="17">c</text><path d="M14 9v5H8M11 11l-3 3 3 3" fill="none" stroke="#2b74b8" strokeWidth="1.500" /></svg>Wrap Text</TextTool>
          <Row>
            <TextTool><svg width="19" height="19" viewBox="0 0 19 19" fill="#fff" stroke="#666"><path d="M.5.500h18v18H.500zM.5 5.500h18M.5 13.500h18M9.500.500v5M9.500 13.500v5" /><path d="M2 9.500h15M5 7L2.500 9.500 5 12M14 7l2.500 2.500L14 12" stroke="#2b74b8" strokeWidth="1.300" fill="none" /></svg>Merge &amp; Center</TextTool>
            <Drop w={16} name="Merge options" />
          </Row>
        </Stack>
      </Group>

      <Group w={184} label="Number" launch>
        <Stack $gap={9}>
          <Picker w={164} value="General" name="Number format" />
          <Row>
            <Tool $w={26} aria-label="Accounting format"><svg width="19" height="19" viewBox="0 0 19 19"><path d="M0 1h18v11H0z" fill="#2b74b8" /><path d="M2 3h14v7H2z" fill="#dbe7f3" /><circle cx="9" cy="6.500" r="2.500" fill="#2b74b8" /><path d="M11 8h8v11H5v-6h6z" fill="#f3f3f3" /><path d="M12 8.500h6M12 11h6M12 13.500h6M6 15h5M6 17.500h5M12 16h6" stroke="#e5ad54" strokeWidth="1.800" /></svg></Tool>
            <Drop w={18} name="Currency options" />
            <Tool $w={26}>%</Tool>
            <Tool $w={30} aria-label="Comma style"><svg width="8" height="12" viewBox="0 0 8 12"><path d="M1 3a3 3 0 1 1 6 0c0 4-1 7-5 9l-.5-1c2-1 2.500-3 2.500-5C2 6 1 5 1 3z" fill="#555" /></svg></Tool>
            <Sep $w={8} />
            <Tool $w={28} aria-label="Increase decimal"><Decimal more /></Tool>
            <Tool $w={26} aria-label="Decrease decimal"><Decimal /></Tool>
          </Row>
        </Stack>
      </Group>

      <Group w={470} label="Styles" p="7px 0 0 10px">
        <BigTool w={88} lines={['Conditional', 'Formatting']} icon={
          <svg width="38" height="38" viewBox="0 -4 38 38"><Cells x={.5} y={.5} w={32} h={28} c={3} r={4} /><path d="M11 1h7v6h-7zM11 15h10v6H11z" fill="#d9603b" /><path d="M11 8h12v6H11zM11 22h5v6h-5z" fill="#3f7fbf" /><path d="M18.500 19.500h18v14h-18z" fill="#fff" stroke="#666" /><path d="M23 24.500h9M23 28.500h9M30 21.500l-5 10" stroke="#444" strokeWidth="1.200" /></svg>
        } />
        <BigTool w={71} lines={['Format as', 'Table']} icon={
          <svg width="40" height="38" viewBox="-2 -3 40 38"><Cells x={.5} y={.5} w={32} h={28} c={4} r={4} /><path d="M9 8h23v20H9z" fill="#bdd0e8" /><path d="M9 14.500h23M9 21.500h23M16.500 8v20M24.500 8v20" stroke="#fff" /><path d="M38 8v8l-7 9-4-3z" fill="#777" /><path d="M26 22l4 4-2 2-4-3z" fill="#555" /><path d="M22 25q6 0 5 6-4 5-17 4 5-2 6-6 2-4 6-4z" fill="#3f7fbf" /><path d="M20 28l3 1-2 3" fill="#fff" /></svg>
        } />
        <Gallery>
          <Swatches>
            <Swatch $kind="link">Hyperlink 2</Swatch>
            <Swatch $kind="plain">Normal 2</Swatch>
            <Swatch $kind="on">Normal</Swatch>
            <Swatch $kind="bad">Bad</Swatch>
          </Swatches>
          <GalleryNav>
            <button aria-label="Previous styles"><Tri d="u" w={7} c="#b8b8b8" /></button>
            <button aria-label="Next styles"><Tri d="d" w={7} /></button>
            <button aria-label="All styles"><svg width="8" height="9" viewBox="0 0 8 9"><path d="M0 0h8v1H0zM0 4h8L4 8z" fill="#555" /></svg></button>
          </GalleryNav>
        </Gallery>
      </Group>

      <Group w={176} label="Cells" p="8px 0 0 10px">
        <BigTool w={53} lines={['Insert', '']} icon={
          <svg width="36" height="38" viewBox="0 -2 36 38"><Cells x={3.5} y={.5} w={18} h={6} c={2} r={1} /><Cells x={3.5} y={23.5} w={18} h={12} c={2} r={2} /><Cells x={17.5} y={11.5} w={18} h={7} c={2} r={1} fill="#bdd0e8" /><path d="M15 15H3M8 10L3 15l5 5" stroke="#2b74b8" strokeWidth="2.500" fill="none" /></svg>
        } />
        <BigTool w={51} lines={['Delete', '']} icon={
          <svg width="36" height="38" viewBox="0 -2 36 38"><Cells x={.5} y={.5} w={18} h={6} c={2} r={1} /><Cells x={.5} y={21.5} w={18} h={12} c={2} r={2} /><Cells x={7.5} y={11.5} w={11} h={6} c={1} r={1} fill="#bdd0e8" /><path d="M18 8l16 14M34 7L18 23" stroke="#d9532c" strokeWidth="2.500" /></svg>
        } />
        <BigTool w={53} lines={['Format', '']} icon={
          <svg width="34" height="38" viewBox="0 0 34 38"><path d="M.5 0v7M28.500 0v7M3 3.500h23M7 0L3 3.500 7 7M22 0l4 3.500L22 7" stroke="#2b74b8" strokeWidth="1.500" fill="none" /><Cells x={.5} y={9.5} w={32} h={24} c={4} r={3} /><path d="M9 15h9v13H9z" fill="#3f7fbf" stroke="#fff" /><path d="M1 37h8l2-3M12 37h8l2-3" stroke="#7a7a7a" fill="none" /></svg>
        } />
      </Group>

      <Group w={241} label="Editing" p="3px 0 0 11px">
        <Stack $w={112}>
          <Row>
            <TextTool><svg width="17" height="17" viewBox="0 0 17 17"><path d="M1 1h14v4h-1q0-2-2-2H5l5 5.500L5 14h8q1 0 2-2h1v4H1v-1.500L7 8.500 1 2.500z" fill="#444" /></svg>AutoSum</TextTool>
            <Drop w={10} name="AutoSum options" />
          </Row>
          <TextTool><svg width="17" height="18" viewBox="0 0 17 18"><path d="M.5.500h16v17H.500z" fill="#fff" stroke="#7a7a7a" /><path d="M0 0h17v3H0z" fill="#7a7a7a" /><path d="M8.500 5v9M5 10.500l3.500 3.500 3.500-3.500" stroke="#2b74b8" strokeWidth="2" fill="none" /></svg>Fill <Caret /></TextTool>
          <TextTool><svg width="17" height="17" viewBox="0 0 17 17"><path d="M12 0h2l3 3v3l-8 6-4-4z" fill="#e8829a" /><path d="M4 8l5 5-3 3H4l-4-3v-2z" fill="#f0a8b8" /></svg>Clear <Caret /></TextTool>
        </Stack>
        <BigSet>
          <BigTool w={54} lines={['Sort &', 'Filter']} icon={
            <svg width="36" height="40" viewBox="0 -2 36 40"><g fontFamily="Open Sans" fontSize="16" fontWeight="600"><text x="0" y="13" fill="#3f7fbf">A</text><text x="0" y="32" fill="#8e5bb0">Z</text></g><path d="M16 7h18l-7 8v10h-4V15z" fill="#777" /><path d="M25 16v8" stroke="#ddd" /></svg>
          } />
          <BigTool w={54} lines={['Find &', 'Select']} icon={
            <svg width="36" height="40" viewBox="2 -2 36 40"><circle cx="22" cy="13" r="11" fill="#fff" stroke="#3f7fbf" strokeWidth="2.500" /><path d="M14 22L3 33" stroke="#3f7fbf" strokeWidth="5" /></svg>
          } />
        </BigSet>
      </Group>
      <Collapse aria-label="Collapse ribbon"><svg width="13" height="8" viewBox="0 0 13 8" fill="none" stroke="#555" strokeWidth="1.400"><path d="M.5 7.500l6-6 6 6" /></svg></Collapse>
    </Ribbon>
  );
}

function Worksheet() {
  return (
    <Sheet>
      <colgroup>
        <col style={{ width: 37 }} />
        {columns.map(([c, w]) => <col key={c} style={{ width: w }} />)}
      </colgroup>
      <thead>
        <tr>
          <Corner><svg width="17" height="17" viewBox="0 0 17 17"><path d="M17 0v17H0z" fill="#b4b4b4" /></svg></Corner>
          {columns.map(([c]) => <Letter key={c} $on={c === 'D'}>{c}</Letter>)}
        </tr>
        <tr>
          <RowNo>1</RowNo>
          {heads.map((h, i) => (
            <HeadCell key={h} $bg="#d9f2d0" $line="#9b9b9b" $right="1px solid #000">
              <Fit $h={44} $bold $lines={h.includes('\n')}>{h}</Fit>
              <Filter aria-label={`Filter ${h}`}>
                {i === 2
                  ? <svg width="13" height="13" viewBox="0 0 13 13"><path d="M0 7h7l-3.500 4z" fill="#555" /><path d="M10.500 11V1.500M9 3.500l1.500-2 1.500 2" stroke="#555" fill="none" /></svg>
                  : <Caret />}
              </Filter>
            </HeadCell>
          ))}
          <HeadCell $line="#9b9b9b" $right="2px solid #000" />
          {['', 'SINP', 'NSMNP', 'UMRBPL', 'SIPLAS'].map((h, i) => (
            <HeadCell key={i} $line="#9b9b9b" $right="1px solid #000"><Fit $h={44} $bold>{h}</Fit></HeadCell>
          ))}
        </tr>
      </thead>
      <tbody>
        {people.map((r, i) => {
          const n = i + 2;
          const h = tallRows.includes(n) ? 43 : 22;
          const s = summary[n];
          return (
            <tr key={n}>
              <RowNo $on={n === 12}>{n}</RowNo>
              {r.map((t, c) => (
                <Cell key={c} $line="#000">
                  <Fit
                    $h={h}
                    $left={c === 3 || c === 4}
                    $lines={t.includes('\n')}
                    $soft={c === 4 && (n === 3 || n === 4)}
                    $u={t === 'Dumagat IPMR'}
                  >{t}</Fit>
                  {n === 12 && c === 3 && <Selection />}
                </Cell>
              ))}
              <Cell $line={GRID} $right={s ? '2px solid #000' : undefined} />
              {s
                ? s.cells.map((t, c) => <Cell key={c} $bg={s.bg} $line="#000"><Fit $h={h} $bold $left={c === 0} $lines={c === 0}>{t}</Fit></Cell>)
                : [0, 1, 2, 3, 4].map(c => <Cell key={c} $line={GRID} />)}
            </tr>
          );
        })}
      </tbody>
    </Sheet>
  );
}

export default function App() {
  const [formula, setFormula] = useState('PENRO Palanan');
  const [zoom, setZoom] = useState(94);
  return (
    <Window>
      <Global />
      <Header>
        <Decor width="640" height="81" viewBox="0 0 640 81" fill="#24623f" opacity=".85">
          <path d="M46 4q30 4 58 0 16 10 19 34 6 8-2 11-24 4-46-5-20-2-34 3 0-12 6-16-16-14-1-27z" opacity=".4" />
          <path d="M150 0h125l-17 60q-16-8-40-6-10 8-24 8h-30q-18-2-18-13 4-2 10 0-6-26-6-49z" />
          <path d="M284 0h188q4 18-2 36 8-4 14 1-6 22-24 21-70-16-110-15-36-2-66 11 6-18 0-54z" />
          <path d="M563 40q8-12 20-6 20 8 57 6v28q-30 0-44-12-34 4-33-16z" />
        </Decor>
        <TitleRow>
          <QuickBar>
            <TitleBtn $w={40} aria-label="Save"><svg width="16" height="16" viewBox="0 0 16 16"><path d="M0 0h16v16H0z" fill="#fff" /><path d="M2 2h12v8H2zM4 12h7v4H4z" fill={GREEN} /><path d="M6 13h3v3H6z" fill="#fff" /></svg></TitleBtn>
            <TitleBtn $w={30} $dim aria-label="Undo"><svg width="19" height="16" viewBox="0 0 19 16" fill="none" stroke="#fff" strokeWidth="3"><path d="M2 5h9q6 0 6 5t-6 5H8M7 0L2 5l5 5" /></svg></TitleBtn>
            <TitleBtn $w={10} $dim aria-label="Undo list"><Caret c="#fff" /></TitleBtn>
            <TitleBtn $w={36} $dim aria-label="Redo"><svg width="19" height="16" viewBox="0 0 19 16" fill="none" stroke="#fff" strokeWidth="3"><path d="M17 5H8q-6 0-6 5t6 5h2M12 0l5 5-5 5" /></svg></TitleBtn>
            <TitleBtn $w={8} $dim aria-label="Redo list"><Caret c="#fff" /></TitleBtn>
            <TitleBtn $w={36} aria-label="Customize toolbar"><svg width="7" height="7" viewBox="0 0 7 7"><path d="M1 0h5v1H1zM0 3h7L3.500 7z" fill="#fff" /></svg></TitleBtn>
          </QuickBar>
          <Title>Number of respondents interviewed, effects of CC, etc.  -  Excel</Title>
          <WindowBar>
            <svg width="19" height="18" viewBox="0 0 19 18"><path d="M9.500 1L18 17H1z" fill="#fbd38a" stroke="#e8831d" strokeWidth="1.600" /><path d="M9.500 5v7M9.500 13.500v2" stroke="#333" strokeWidth="2" /></svg>
            <UserName>Lorine Bano</UserName>
            <svg width="30" height="30" viewBox="0 0 30 30"><path d="M0 0h30v30H0z" fill="#b3b0b0" /><ellipse cx="15" cy="11" rx="5.500" ry="7" fill="#fff" /><path d="M4 30q-1-12 7-12 4 3 8 0 8 0 7 12z" fill="#fff" /></svg>
            <Controls>
              <TitleBtn $w={57} aria-label="Ribbon display options"><svg width="17" height="14" viewBox="0 0 17 14" fill="none" stroke="#fff"><path d="M.5.500h16v13H.500zM.5 3.500h16M8.500 11.500V6M6 8l2.500-2.500L11 8" /></svg></TitleBtn>
              <TitleBtn $w={57} aria-label="Minimize"><svg width="13" height="13" viewBox="0 0 13 13" stroke="#fff"><path d="M0 6.500h13" /></svg></TitleBtn>
              <TitleBtn $w={57} aria-label="Restore"><svg width="14" height="13" viewBox="0 0 14 13" fill="none" stroke="#fff"><path d="M.5 3.500h9v9h-9zM3.500 3V.500h10v9H10" /></svg></TitleBtn>
              <TitleBtn $w={57} aria-label="Close"><svg width="13" height="13" viewBox="0 0 13 13" stroke="#fff" strokeWidth="1.200"><path d="M.5.500l12 12M12.500.500l-12 12" /></svg></TitleBtn>
            </Controls>
          </WindowBar>
        </TitleRow>
        <TabRow>
          <Tab $file>File</Tab>
          <Tab $active>Home</Tab>
          {['Insert', 'Page Layout', 'Formulas', 'Data', 'Review', 'View', 'Help'].map(t => <Tab key={t}>{t}</Tab>)}
          <TellMe>
            <svg width="15" height="20" viewBox="0 0 15 20" fill="none" stroke="#fff" strokeWidth="1.300"><path d="M5 14q0-2-2-4.500A6 6 0 0 1 7.500.7 6 6 0 0 1 12 9.500Q10 12 10 14zM5 16.500h5M5.500 19h4" /></svg>
            <TellInput aria-label="Tell me what you want to do" placeholder="Tell me what you want to do" />
          </TellMe>
          <Share>
            <svg width="18" height="19" viewBox="0 0 18 19" fill="none" stroke="#fff" strokeWidth="1.200"><circle cx="8.500" cy="6" r="5" /><path d="M.6 17.500q1-6 5.400-7.200M8 14.500h9M13.500 10v9" /></svg>
            Share
          </Share>
        </TabRow>
      </Header>

      <RibbonPanel />

      <FormulaBar>
        <NameBox><input aria-label="Name box" defaultValue="D12" /><Caret /></NameBox>
        <Grip $w={37} />
        <FxBox>
          <button aria-label="Cancel"><svg width="16" height="14" viewBox="0 0 16 14" stroke="#c0c0c0" strokeWidth="2"><path d="M1 1l14 12M15 1L1 13" /></svg></button>
          <button aria-label="Enter"><svg width="17" height="13" viewBox="0 0 17 13" fill="none" stroke="#c0c0c0" strokeWidth="3"><path d="M1 7l5 4L16 1" /></svg></button>
          <button aria-label="Insert function"><FxText>fx</FxText></button>
        </FxBox>
        <FormulaField>
          <textarea aria-label="Formula" value={formula} onChange={e => setFormula(e.target.value)} />
          <button aria-label="Collapse formula bar"><svg width="10" height="7" viewBox="0 0 10 7" fill="none" stroke="#666" strokeWidth="2.500"><path d="M1 6l4-4 4 4" /></svg></button>
        </FormulaField>
      </FormulaBar>

      <SheetArea>
        <SheetClip><Worksheet /></SheetClip>
        <VScroll>
          <ScrollBtn aria-label="Scroll up"><Tri d="u" /></ScrollBtn>
          <VThumb />
          <ScrollBtn aria-label="Scroll down"><Tri d="d" /></ScrollBtn>
        </VScroll>
      </SheetArea>

      <SheetBar>
        <SheetNav>
          <button aria-label="Previous sheet"><Tri d="l" c="#bbb" /></button>
          <button aria-label="Next sheet"><Tri d="r" c="#bbb" /></button>
        </SheetNav>
        <ActiveTab $w={120}>FGD and KII</ActiveTab>
        <SheetTab $w={104} $bg="#92d050">CCRA Tool</SheetTab>
        <TabLine />
        <SheetTab $w={226} $bg="#4ea72e">Effects of Climate Change</SheetTab>
        <TabLine />
        <AddTab aria-label="New sheet"><svg width="20" height="20" viewBox="0 0 20 20" fill="none" stroke="#888"><circle cx="10" cy="10" r="9.300" strokeWidth="1.300" /><path d="M5 10h10M10 5v10" stroke="#777" strokeWidth="2" /></svg></AddTab>
        <Grip $w={34} />
        <HScroll>
          <ScrollBtn aria-label="Scroll left"><Tri d="l" /></ScrollBtn>
          <HThumb />
          <ScrollBtn aria-label="Scroll right"><Tri d="r" /></ScrollBtn>
        </HScroll>
      </SheetBar>

      <Status>
        <Views>
          <View $on aria-label="Normal view"><svg width="16" height="16" viewBox="0 0 16 16" fill="none" stroke="#666"><path d="M.5.500h15v15H.500zM.5 5.500h15M.5 10.500h15M5.500.500v15M10.500.500v15" /></svg></View>
          <View aria-label="Page layout view"><svg width="17" height="16" viewBox="0 0 17 16" fill="none" stroke="#666"><path d="M.5.500h16v15H.500zM4.500 2.500h8v11h-8zM6 5.500h5M6 7.500h5M6 9.500h5M6 11.500h5" /></svg></View>
          <View aria-label="Page break view"><svg width="17" height="16" viewBox="0 0 17 16" fill="none" stroke="#666"><path d="M.5.500h16v15H.500zM.5 9.500h10V.500M5.500.500v9" /></svg></View>
        </Views>
        <ZoomBtn aria-label="Zoom out"><svg width="10" height="10" viewBox="0 0 10 10" stroke="#444"><path d="M0 4.500h10" /></svg></ZoomBtn>
        <Zoom type="range" min="0" max="200" value={zoom} onChange={e => setZoom(+e.target.value)} aria-label="Zoom" />
        <ZoomBtn aria-label="Zoom in"><svg width="10" height="10" viewBox="0 0 10 10" stroke="#444"><path d="M0 4.500h10M5.500 0v10" /></svg></ZoomBtn>
        <Percent>{zoom}%</Percent>
      </Status>

      <Taskbar>
        <Weather aria-label="Weather 25°">
          <svg width="44" height="40" viewBox="0 0 44 40"><path d="M9 17q3-6 8-6 6 0 8 6 7 0 7 7 0 6-7 6H10q-8 0-8-7 0-6 7-6z" fill="#b9cdf7" /><path d="M2 24q3 4 12 4h17q-2 3-6 3H10q-7 0-8-7z" fill="#e3ecff" /><path d="M22 24l5 8q1 6-4 6t-4-5z" fill="#1f7df0" /><circle cx="28" cy="12" r="12" fill="#2f2f2f" /><text x="28" y="15" fontFamily="Open Sans" fontSize="13" fill="#fff" textAnchor="middle">25°</text></svg>
        </Weather>
        <Apps>
          {taskIcons.map(t => (
            <AppBtn key={t.name} $on={t.on} aria-label={t.name}>{t.art}{t.run && <Mark $on={t.on} />}</AppBtn>
          ))}
        </Apps>
        <Tray>
          <button aria-label="Hidden icons"><svg width="14" height="9" viewBox="0 0 14 9" fill="none" stroke="#fff" strokeWidth="1.800"><path d="M1 8l6-6 6 6" /></svg></button>
          <Lang>ENG<br />US</Lang>
          <TrayIcons aria-label="Network, volume and battery">
            <svg width="20" height="16" viewBox="0 0 20 16" fill="none" stroke="#fff" strokeWidth="1.500"><path d="M1 6q9-8 18 0M4 9q6-5 12 0M7 12q3-2 6 0" /><circle cx="10" cy="14" r="1.300" fill="#fff" stroke="none" /></svg>
            <svg width="20" height="18" viewBox="0 0 20 18" fill="none" stroke="#fff" strokeWidth="1.400"><path d="M1 6h3l5-4v14l-5-4H1zM12 6q2 3 0 6M14.500 4q4 5 0 10M17 2q5 7 0 14" /></svg>
            <svg width="20" height="18" viewBox="0 0 20 18"><path d="M7 5.500h9q1.500 0 1.500 1.500v7q0 1.500-1.500 1.500H4q-1.500 0-1.500-1.500v-3" fill="none" stroke="#fff" strokeWidth="1.500" /><path d="M8 8h7v5H5v-2zM18 8h2v5h-2zM4 0L0 8h3l-1 5 6-8H5l2-5z" fill="#fff" /></svg>
          </TrayIcons>
          <Clock>9:52 pm<br />30/06/2025</Clock>
        </Tray>
      </Taskbar>
    </Window>
  );
}
